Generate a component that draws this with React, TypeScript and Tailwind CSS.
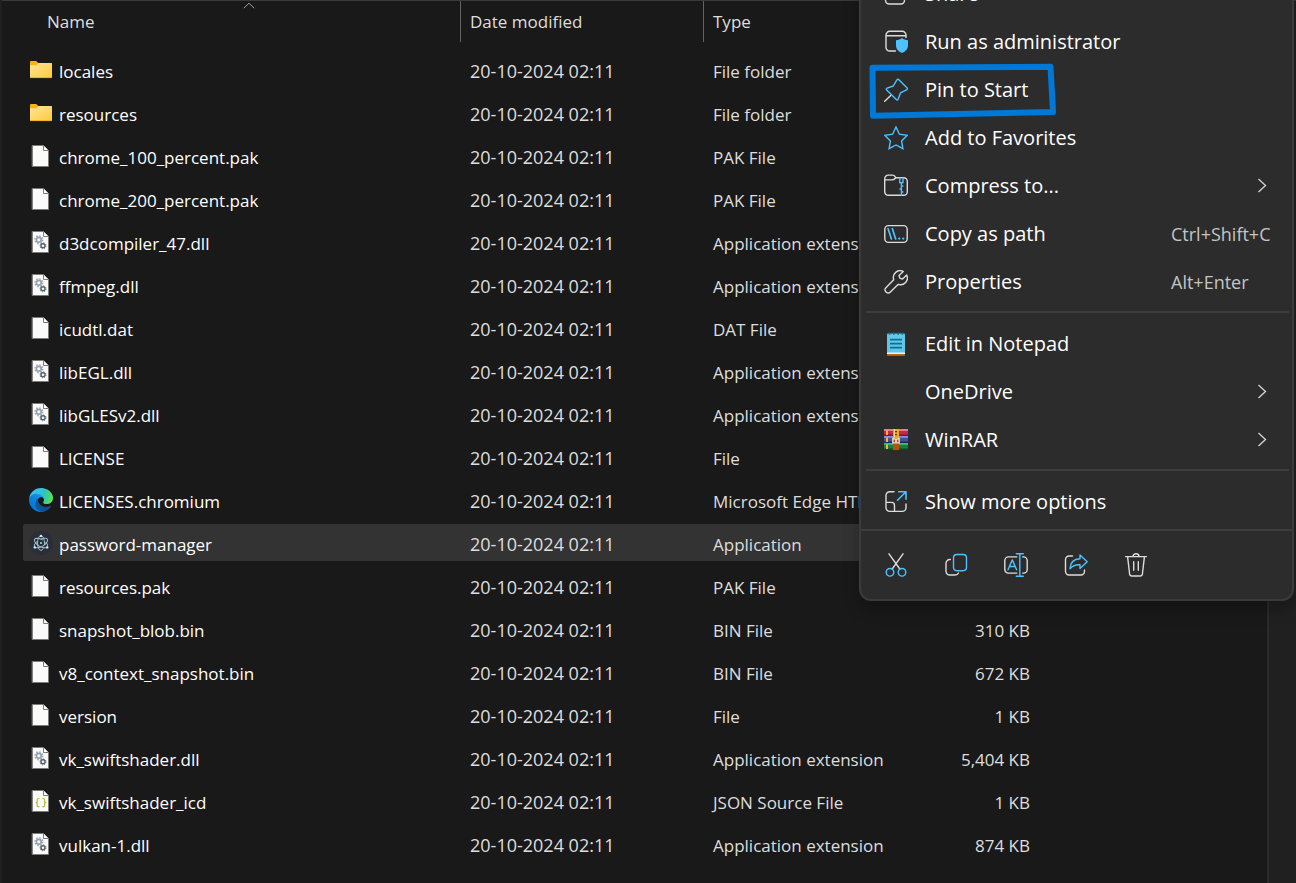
import React from "react";

type FileKind = "folder" | "doc" | "dll" | "edge" | "electron" | "json";

interface FileRow {
  name: string;
  kind: FileKind;
  type: string;
  size?: string;
  selected?: boolean;
}

const DATE = "20-10-2024 02:11";

const FILES: FileRow[] = [
  { name: "locales", kind: "folder", type: "File folder" },
  { name: "resources", kind: "folder", type: "File folder" },
  { name: "chrome_100_percent.pak", kind: "doc", type: "PAK File" },
  { name: "chrome_200_percent.pak", kind: "doc", type: "PAK File" },
  { name: "d3dcompiler_47.dll", kind: "dll", type: "Application extension" },
  { name: "ffmpeg.dll", kind: "dll", type: "Application extension" },
  { name: "icudtl.dat", kind: "doc", type: "DAT File" },
  { name: "libEGL.dll", kind: "dll", type: "Application extension" },
  { name: "libGLESv2.dll", kind: "dll", type: "Application extension" },
  { name: "LICENSE", kind: "doc", type: "File" },
  { name: "LICENSES.chromium", kind: "edge", type: "Microsoft Edge HTML Document" },
  { name: "password-manager", kind: "electron", type: "Application", selected: true },
  { name: "resources.pak", kind: "doc", type: "PAK File" },
  { name: "snapshot_blob.bin", kind: "doc", type: "BIN File", size: "310 KB" },
  { name: "v8_context_snapshot.bin", kind: "doc", type: "BIN File", size: "672 KB" },
  { name: "version", kind: "doc", type: "File", size: "1 KB" },
  { name: "vk_swiftshader.dll", kind: "dll", type: "Application extension", size: "5,404 KB" },
  { name: "vk_swiftshader_icd", kind: "json", type: "JSON Source File", size: "1 KB" },
  { name: "vulkan-1.dll", kind: "dll", type: "Application extension", size: "874 KB" },
];

const BLUE = "#4cc2ff";
const LIGHT = "#dcdcdc";

function Svg({ children, viewBox = "0 0 24 24" }: { children: React.ReactNode; viewBox?: string }) {
  return (
    <svg
      viewBox={viewBox}
      className="size-6 shrink-0"
      fill="none"
      stroke={LIGHT}
      strokeWidth="1.4"
      strokeLinecap="round"
      strokeLinejoin="round"
      aria-hidden="true"
    >
      {children}
    </svg>
  );
}

function Sheet({ children }: { children?: React.ReactNode }) {
  return (
    <Svg>
      <path d="M3.5 1.5H14.5L19.5 6.5V22.5H3.5Z" fill="#fafafa" stroke="#7d7b78" strokeWidth="1" strokeLinejoin="miter" />
      <path d="M14.5 1.5V6.5H19.5" fill="#fff" stroke="#7d7b78" strokeWidth="1" strokeLinejoin="miter" />
      {children}
    </Svg>
  );
}

function FileIcon({ kind }: { kind: FileKind }) {
  switch (kind) {
    case "folder":
      return (
        <Svg>
          <defs>
            <linearGradient id="folder-front" x1="0" y1="0" x2="1" y2="1">
              <stop offset="0" stopColor="#ffe69b" />
              <stop offset="1" stopColor="#ffc93a" />
            </linearGradient>
          </defs>
          <path d="M1 4a1 1 0 0 1 1-1h5.2l2 2H22a1 1 0 0 1 1 1v6H1z" fill="#fbb40e" stroke="none" />
          <path d="M1 7.2h6.6L9.6 5H22a1 1 0 0 1 1 1v13a1 1 0 0 1-1 1H2a1 1 0 0 1-1-1z" fill="url(#folder-front)" stroke="none" />
          <path d="M1.4 19.6h21.2" stroke="#e9a820" strokeWidth="0.8" />
        </Svg>
      );
    case "dll":
      return (
        <Sheet>
          <circle cx="9.8" cy="9.8" r="2.4" stroke="#97a3ae" strokeWidth="1.7" />
          <circle cx="9.8" cy="9.8" r="3.9" stroke="#97a3ae" strokeWidth="1.4" strokeLinecap="butt" strokeDasharray="1.5 1.56" />
          <circle cx="14" cy="15.8" r="2" stroke="#54606a" strokeWidth="1.4" />
          <circle cx="14" cy="15.8" r="3" stroke="#54606a" strokeWidth="0.9" strokeLinecap="butt" strokeDasharray="1.1 1.26" />
        </Sheet>
      );
    case "json":
      return (
        <Sheet>
          <path
            d="M10 9.5H9.4c-.8 0-1.2.5-1.2 1.3v1.6c0 .7-.4 1.2-1.2 1.2.8 0 1.2.5 1.2 1.2v1.6c0 .8.4 1.3 1.2 1.3h.6M13.8 9.5h.6c.8 0 1.2.5 1.2 1.3v1.6c0 .7.4 1.2 1.2 1.2-.8 0-1.2.5-1.2 1.2v1.6c0 .8-.4 1.3-1.2 1.3h-.6"
            stroke="#b9b53a"
            strokeWidth="1.2"
          />
        </Sheet>
      );
    case "edge":
      return (
        <Svg viewBox="0 0 256 256">
          <defs>
            <linearGradient id="edge-a" x1="63" y1="178" x2="241" y2="178" gradientUnits="userSpaceOnUse">
              <stop offset="0" stopColor="#0c59a4" />
              <stop offset="1" stopColor="#114a8b" />
            </linearGradient>
            <linearGradient id="edge-b" x1="157" y1="90" x2="46" y2="221" gradientUnits="userSpaceOnUse">
              <stop offset="0" stopColor="#1b9de2" />
              <stop offset="0.4" stopColor="#1384d7" />
              <stop offset="1" stopColor="#0078d4" />
            </linearGradient>
            <radialGradient id="edge-c" cx="30" cy="50" r="240" gradientUnits="userSpaceOnUse">
              <stop offset="0" stopColor="#35c1f1" />
              <stop offset="0.3" stopColor="#34c1ed" />
              <stop offset="0.55" stopColor="#2fc2c8" />
              <stop offset="0.8" stopColor="#43d27a" />
              <stop offset="1" stopColor="#66eb4e" />
            </radialGradient>
          </defs>
          <g transform="translate(-4.63 -4.92)" stroke="none">
            <path
              fill="url(#edge-a)"
              d="M235.68 195.46a93.73 93.73 0 0 1-10.54 4.71 101.87 101.87 0 0 1-35.9 6.46c-47.32 0-88.54-32.55-88.54-74.32A31.48 31.48 0 0 1 117.13 105c-42.8 1.8-53.8 46.4-53.8 72.53 0 73.88 68.09 81.37 82.76 81.37 7.91 0 19.84-2.3 27-4.56l1.31-.44a128.34 128.34 0 0 0 66.6-52.8 4 4 0 0 0-5.32-5.64z"
            />
            <path
              fill="url(#edge-b)"
              d="M110.34 246.34A79.2 79.2 0 0 1 87.6 225a80.72 80.72 0 0 1 29.53-120c3.12-1.47 8.45-4.13 15.54-4a32.35 32.35 0 0 1 25.69 13 31.88 31.88 0 0 1 6.36 18.66c0-.21 24.46-79.6-80-79.6-43.9 0-80 41.66-80 78.21a130.15 130.15 0 0 0 12.11 56 128 128 0 0 0 156.38 67.11 75.55 75.55 0 0 1-62.78-8z"
            />
            <path
              fill="url(#edge-c)"
              d="M156.94 153.78c-.81 1.05-3.3 2.5-3.3 5.66 0 2.61 1.7 5.12 4.72 7.23 14.38 10 41.49 8.68 41.56 8.68a59.56 59.56 0 0 0 30.27-8.35 61.38 61.38 0 0 0 30.43-52.88c.26-22.41-8-37.31-11.34-43.91C228.09 28.76 182.35 4.92 132.61 4.92a128 128 0 0 0-128 126.2c.48-36.54 36.8-66.05 80-66.05 3.5 0 23.46.34 42 10.07 16.34 8.58 24.9 18.94 30.85 29.21 6.18 10.67 7.28 24.15 7.28 29.52s-2.74 13.33-7.8 19.91z"
            />
          </g>
        </Svg>
      );
    case "electron":
      return (
        <Svg>
          <circle cx="12" cy="12" r="12" fill="#2b2e3a" stroke="none" />
          <g stroke="#a5cdd6" strokeWidth="0.9">
            <ellipse cx="12" cy="12" rx="7.4" ry="3.5" transform="rotate(30 12 12)" strokeDasharray="26 4" />
            <ellipse cx="12" cy="12" rx="7.4" ry="3.5" transform="rotate(-30 12 12)" strokeDasharray="24 5" />
            <ellipse cx="12" cy="12" rx="7.4" ry="3.5" transform="rotate(90 12 12)" strokeDasharray="28 4" />
          </g>
          <g fill="#c4edf2" stroke="none">
            <circle cx="12" cy="12" r="0.9" />
            <circle cx="12" cy="5" r="1.2" />
            <circle cx="5.8" cy="16.4" r="1.2" />
            <circle cx="18.2" cy="16.4" r="1.2" />
          </g>
        </Svg>
      );
    default:
      return <Sheet />;
  }
}

const ShareIcon = () => (
  <Svg>
    <path d="M8.5 3H5.2A3.7 3.7 0 0 0 1.5 6.7v11.6A3.7 3.7 0 0 0 5.2 22h11.6a3.7 3.7 0 0 0 3.7-3.7V17" />
    <path d="M16 2v3.8C10 6 6.4 9.5 6 15.8 8.5 12.6 11.5 11.6 16 11.8v3.8l7.2-6.8z" stroke={BLUE} />
  </Svg>
);

const AdminIcon = () => (
  <Svg>
    <path d="M11.5 21H5.7A3.7 3.7 0 0 1 2 17.3V5a3.7 3.7 0 0 1 3.7-3.7h12.6A3.7 3.7 0 0 1 22 5v2.5M2 5.7h20" />
    <path d="M18 8c1.8 1.5 3.7 2.1 6 2.2v5c0 3.8-2.3 6.2-6 7.7-3.7-1.5-6-3.9-6-7.7v-5c2.3-.1 4.2-.7 6-2.2z" fill={BLUE} stroke="none" />
  </Svg>
);

const PinIcon = () => (
  <Svg>
    <path d="M.7 23.3 6.7 17.4" />
    <path d="M12.7 2.1c.5-1 1.4-1.2 2.2-.4l8 8c.8.8.6 1.7-.4 2.2l-6 3-2.4 6.3c-.3.9-1.1 1.1-1.8.4L2.7 12c-.7-.7-.5-1.5.4-1.8L9.3 8z" stroke={BLUE} />
  </Svg>
);

const StarIcon = () => (
  <Svg>
    <path d="m12 1 3.4 7.2 7.8 1.1-5.6 5.6 1.3 7.8-6.9-3.7-6.9 3.7 1.3-7.8L.8 9.3l7.8-1.1z" stroke={BLUE} strokeLinejoin="miter" />
  </Svg>
);

const CompressIcon = () => (
  <Svg>
    <path d="M4.3 21.3A3.6 3.6 0 0 1 .7 17.7V4.7A3.6 3.6 0 0 1 4.3 1.1h4.2a3 3 0 0 1 2.6 1.6l.8 1.1h7.8a3.6 3.6 0 0 1 3.6 3.6v10.3a3.6 3.6 0 0 1-3.6 3.6zM.9 5.9h7.6c1.5 0 2.3-.8 3.3-2.1" />
    <path d="M15.8 4v4.8h3.2V4M17.4 9v12.2M17.4 12h1.5M15.9 15h1.5M17.4 18h1.5" stroke={BLUE} />
  </Svg>
);

const PathIcon = () => (
  <Svg>
    <rect x="0.8" y="3.6" width="22.4" height="16.8" rx="3.6" />
    <path d="M4 6.6 7.4 17M8.3 6.6 11.7 17" stroke={BLUE} strokeWidth="1.7" />
    <path d="M15.2 16.6h.1M19.2 16.6h.1" stroke={BLUE} strokeWidth="2.2" />
  </Svg>
);

const WrenchIcon = () => (
  <Svg>
    <path d="M19.3 1.5A6.8 6.8 0 0 0 9.7 9.7L1.7 17.9a2.6 2.6 0 0 0 0 3.7l.7.7a2.6 2.6 0 0 0 3.7 0l8.2-8a6.8 6.8 0 0 0 8.4-9.3L18.5 9.1 15.9 8.2 15 5.6z" />
  </Svg>
);

const NotepadIcon = () => (
  <Svg>
    <rect x="3" y="19.5" width="18" height="4.5" rx="0.8" fill="#b4580f" stroke="none" />
    <rect x="3" y="18.5" width="18" height="3.6" fill="#f3efe9" stroke="none" />
    <path d="M3 2.5A1 1 0 0 1 4 1.5h16a1 1 0 0 1 1 1V20.5H3z" fill="#5ec8e6" stroke="none" />
    <path d="M5.7.8v1.5M9.9.8v1.5M14.1.8v1.5M18.3.8v1.5" stroke="#0e6a90" strokeWidth="1.5" />
    <path d="M6 7.7h12M6 11.7h12M6 15.7h12" stroke="#0f6f96" strokeWidth="1.7" strokeLinecap="butt" />
  </Svg>
);

const WinRarIcon = () => (
  <Svg>
    <g stroke="none">
      <rect x="0" y="1" width="24" height="7" fill="#c5264a" />
      <rect x="0" y="1" width="24" height="2" fill="#ee7590" />
      <rect x="0" y="6.5" width="24" height="1.5" fill="#7e1230" />
      <rect x="0" y="8" width="24" height="7" fill="#474f9e" />
      <rect x="0" y="8" width="24" height="1.8" fill="#8d8fd4" />
      <rect x="0" y="13.5" width="24" height="1.5" fill="#22255f" />
      <rect x="0" y="15" width="24" height="7" fill="#15803f" />
      <rect x="0" y="15" width="24" height="1.8" fill="#4bb86f" />
      <rect x="0" y="20.5" width="24" height="1.5" fill="#0a4a22" />
      <path d="M2 2.5h2V7H2zM2 9.5h2V14H2zM2 16.5h2V21H2z" fill="#f6b52c" />
      <rect x="9" y="1" width="6" height="11" fill="#eda625" />
      <rect x="9" y="12" width="6" height="10" fill="#b8500f" />
      <path d="M11 3h2v1.200h-2zM11 6h2v1.200h-2z" fill="#6d3a08" />
      <rect x="10" y="1" width="1" height="8" fill="#ffdf7d" />
    </g>
    <path d="M10 10.300H8.800v4.600h1.700M14 10.300h1.200v4.600h-1.700" stroke="#e9e4dc" strokeWidth="1.3" />
    <path d="M12 11.500V15" stroke="#f2f2f2" strokeWidth="1.5" />
  </Svg>
);

const MoreIcon = () => (
  <Svg>
    <path d="M10 1.7H5.7A3.7 3.7 0 0 0 2 5.4v12.3a3.7 3.7 0 0 0 3.7 3.7h12.6a3.7 3.7 0 0 0 3.7-3.7V14M2 12.4h5.5a3 3 0 0 1 3 3v6" />
    <path d="M14.7 1.7H22v7.6M22 1.7l-8.5 8.5" stroke={BLUE} strokeWidth="1.6" />
  </Svg>
);

const CutIcon = () => (
  <Svg>
    <path d="M5 .8 15.8 16M19 .8 8.2 16" />
    <circle cx="6" cy="19.3" r="3.8" stroke={BLUE} />
    <circle cx="18" cy="19.3" r="3.8" stroke={BLUE} />
  </Svg>
);

const CopyIcon = () => (
  <Svg>
    <path d="M6.3 6.5a3.8 3.8 0 0 0-4.3 3.8v7.9A3.8 3.8 0 0 0 5.8 22h5.2a3.8 3.8 0 0 0 3.5-2" />
    <rect x="9.5" y="1.5" width="13" height="16.2" rx="3.4" stroke={BLUE} />
  </Svg>
);

const RenameIcon = () => (
  <Svg>
    <path d="M12.8 3.9H4.4A3.6 3.6 0 0 0 .8 7.5v9a3.6 3.6 0 0 0 3.6 3.6h8.4M18.7 3.9h.9a3.6 3.6 0 0 1 3.6 3.6v9a3.6 3.6 0 0 1-3.6 3.6h-.9" />
    <path d="M4 16.8 8.3 6.9l4.3 9.9M5.5 13.5h5.6M12.3.8h7M12.3 23.2h7M15.8.8v22.4" stroke={BLUE} />
  </Svg>
);

const DeleteIcon = () => (
  <Svg>
    <path d="M1.6 3.6h20.8M9 3.4a3 2.6 0 0 1 6 0M3.6 3.8l2 17.2a2.2 2.2 0 0 0 2.2 2h8.4a2.2 2.2 0 0 0 2.2-2l2-17.2M9.7 8.7v8.6M14.3 8.7v8.6" />
  </Svg>
);

interface MenuItem {
  label: string;
  icon?: React.ReactNode;
  shortcut?: string;
  submenu?: boolean;
  marked?: boolean;
}

const GROUPS: MenuItem[][] = [
  [
    { label: "Share", icon: <ShareIcon /> },
    { label: "Run as administrator", icon: <AdminIcon /> },
    { label: "Pin to Start", icon: <PinIcon />, marked: true },
    { label: "Add to Favorites", icon: <StarIcon /> },
    { label: "Compress to...", icon: <CompressIcon />, submenu: true },
    { label: "Copy as path", icon: <PathIcon />, shortcut: "Ctrl+Shift+C" },
    { label: "Properties", icon: <WrenchIcon />, shortcut: "Alt+Enter" },
  ],
  [
    { label: "Edit in Notepad", icon: <NotepadIcon /> },
    { label: "OneDrive", submenu: true },
    { label: "WinRAR", icon: <WinRarIcon />, submenu: true },
  ],
  [{ label: "Show more options", icon: <MoreIcon /> }],
];

const ACTIONS = [
  { label: "Cut", icon: <CutIcon /> },
  { label: "Copy", icon: <CopyIcon /> },
  { label: "Rename", icon: <RenameIcon /> },
  { label: "Share", icon: <ShareIcon /> },
  { label: "Delete", icon: <DeleteIcon /> },
];

function MenuRow({ item }: { item: MenuItem }) {
  return (
    <button type="button" role="menuitem" className="relative flex h-12 w-full items-center pl-[23px] text-left">
      <span className="flex w-6 shrink-0 pb-px">{item.icon}</span>
      <span className="ml-[17px] flex-1 text-xl whitespace-nowrap text-white">{item.label}</span>
      {item.shortcut && <span className="w-[121px] pb-px text-lg whitespace-nowrap text-[#c5c5c5]">{item.shortcut}</span>}
      {item.submenu && (
        <svg viewBox="0 0 10 16" className="mr-[25px] h-4 w-[10px]" fill="none" stroke="#cfcfcf" strokeWidth="1.4" aria-hidden="true">
          <path d="m1.5 1 7 6.5-7 6.5" />
        </svg>
      )}
      {item.marked && (
        <svg viewBox="0 0 190 58" className="pointer-events-none absolute -top-1 left-2 h-[58px] w-[190px]" aria-hidden="true">
          <path d="M3.5 5.8 181.5 4.7 184 50 4 53.8z" fill="none" stroke="#0078d7" strokeWidth="6" strokeLinejoin="round" />
        </svg>
      )}
    </button>
  );
}

function ContextMenu() {
  return (
    <div
      role="menu"
      className="absolute -top-[30px] right-[2px] w-[435px] rounded-b-xl border-2 border-t-0 border-[#3b3b3b] bg-[#2c2c2c] shadow-[0_8px_16px_rgba(0,0,0,0.25)]"
    >
      {GROUPS.map((group, i) => (
        <div key={i}>
          {i > 0 && <div className="mt-[5px] mr-[3px] mb-[7px] ml-[5px] h-[2px] bg-[#3d3d3d]" />}
          {group.map((item) => (
            <MenuRow key={item.label} item={item} />
          ))}
        </div>
      ))}
      <div className="mt-[3px] flex h-[70px] items-center border-t-2 border-[#3d3d3d] pl-[5px]">
        {ACTIONS.map((action) => (
          <button key={action.label} type="button" aria-label={action.label} className="flex h-12 w-[60px] items-center justify-center">
            {action.icon}
          </button>
        ))}
      </div>
    </div>
  );
}

function HeaderCell({ label, className, sorted }: { label: string; className: string; sorted?: boolean }) {
  return (
    <th scope="col" className="relative h-[50px] p-0 text-left align-top font-normal">
      <div className={`flex h-[41px] items-center border-r border-[#636363] pt-px ${className}`}>{label}</div>
      {sorted && (
        <svg viewBox="0 0 12 7" className="absolute top-[1px] left-[220px] h-[7px] w-3" fill="none" stroke="#a0a0a0" aria-hidden="true">
          <path d="m.8 6.2 5.2-5 5.2 5" />
        </svg>
      )}
    </th>
  );
}

function FileTable() {
  return (
    <table className="w-full table-fixed border-collapse text-[17px] leading-6 whitespace-nowrap text-[#dedede]">
      <colgroup>
        <col className="w-[438px]" />
        <col className="w-[243px]" />
        <col className="w-[210px]" />
        <col className="w-[125px]" />
        <col />
      </colgroup>
      <thead>
        <tr>
          <HeaderCell label="Name" className="pl-6" sorted />
          <HeaderCell label="Date modified" className="pl-[9px]" />
          <HeaderCell label="Type" className="pl-[9px]" />
          <td />
          <td />
        </tr>
      </thead>
      <tbody>
        {FILES.map((file) => {
          const bg = file.selected ? "bg-[#333333]" : "";
          return (
            <tr key={file.name}>
              <td className="p-0 pb-[6px]">
                <div className={`flex h-[37px] items-start gap-[6px] rounded-l-xs pt-[7px] pl-[6px] text-white ${bg}`}>
                  <FileIcon kind={file.kind} />
                  <span className="pt-[2px]">{file.name}</span>
                </div>
              </td>
              <td className="p-0 pb-[6px]">
                <div className={`h-[37px] pt-2 pl-[9px] text-lg/6 ${bg}`}>{DATE}</div>
              </td>
              <td className="p-0 pb-[6px]">
                <div className={`h-[37px] truncate pt-[9px] pl-[9px] ${bg}`}>{file.type}</div>
              </td>
              <td className="p-0 pb-[6px]">
                <div className={`h-[37px] pt-[9px] pr-[9px] text-right ${bg}`}>{file.size}</div>
              </td>
              <td className="p-0" />
            </tr>
          );
        })}
      </tbody>
    </table>
  );
}

export default function App() {
  return (
    <div className="relative flex min-h-screen overflow-hidden border-l-2 border-l-[#202020] bg-[#191919] font-['Open_Sans','Noto_Sans',sans-serif]">
      <main className="min-w-0 flex-1 border-t border-[#3a3a3a] pl-[21px]">
        <FileTable />
      </main>
      <aside className="w-[29px] shrink-0 border-t border-l-2 border-t-[#3a3a3a] border-l-[#2a2a2a] bg-[#202020]" />
      <ContextMenu />
    </div>
  );
}
